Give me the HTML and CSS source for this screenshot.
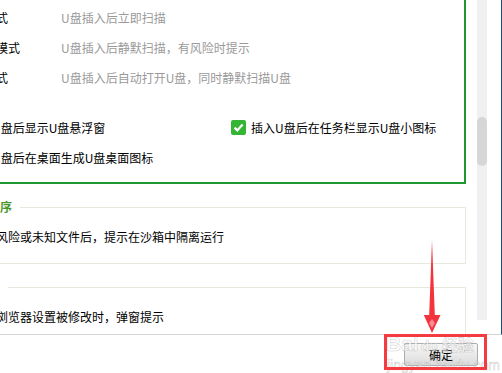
FILE: index.html
```html
<!DOCTYPE html>
<html lang="zh-CN">
<head>
    <meta charset="UTF-8" />
    <meta name="viewport" content="width=device-width, initial-scale=1.0"/>
    <title>U盘安全设置</title>
    <link rel="stylesheet" href="styles.css">
</head>
<body>
<div class="window">
    <div class="main">
        <div class="viewport">
            <div class="content">
                <div class="mode-box">
                    <div class="mode-row"><span class="mode-name">普通模式</span><span class="mode-desc">U盘插入后立即扫描</span></div>
                    <div class="mode-row"><span class="mode-name">全静默模式</span><span class="mode-desc">U盘插入后静默扫描，有风险时提示</span></div>
                    <div class="mode-row"><span class="mode-name">自动模式</span><span class="mode-desc">U盘插入后自动打开U盘，同时静默扫描U盘</span></div>

                    <div class="checks">
                        <label class="check">
                            <svg class="tick" width="15" height="15" viewBox="0 0 15 15"><rect width="15" height="15" rx="2" fill="#35b534"/><path d="M3.5 7.6 L6.3 10.4 L11.6 4.6" fill="none" stroke="#fff" stroke-width="2.2"/></svg>
                            插入U盘后显示U盘悬浮窗
                        </label>
                        <label class="check">
                            <svg class="tick" width="15" height="15" viewBox="0 0 15 15"><rect width="15" height="15" rx="2" fill="#35b534"/><path d="M3.5 7.6 L6.3 10.4 L11.6 4.6" fill="none" stroke="#fff" stroke-width="2.2"/></svg>
                            插入U盘后在任务栏显示U盘小图标
                        </label>
                        <label class="check">
                            <svg class="tick" width="15" height="15" viewBox="0 0 15 15"><rect width="15" height="15" rx="2" fill="#35b534"/><path d="M3.5 7.6 L6.3 10.4 L11.6 4.6" fill="none" stroke="#fff" stroke-width="2.2"/></svg>
                            插入U盘后在桌面生成U盘桌面图标
                        </label>
                    </div>
                </div>

                <fieldset class="group">
                    <legend>隔离可疑程序</legend>
                    <div class="group-row">运行时发现风险或未知文件后，提示在沙箱中隔离运行</div>
                </fieldset>

                <fieldset class="group">
                    <legend>浏览器防护</legend>
                    <div class="group-row">首页或默认浏览器设置被修改时，弹窗提示</div>
                </fieldset>
            </div>
        </div>
        <div class="scrollbar"><div class="thumb"></div></div>
    </div>

    <div class="footer">
        <button class="ok" type="button">确定</button>
    </div>

    <!-- annotation drawn over the screenshot -->
    <div class="watermark">
        <div class="wm-logo"><span class="wm-bai">Bai</span><span class="wm-du">du</span><span class="wm-cn">经验</span></div>
        <div class="wm-url">jingyan.baidu.com</div>
    </div>
    <div class="mark-box"></div>
    <svg class="arrow" width="26" height="100" viewBox="0 0 26 100">
        <polygon points="12,4 14.8,79 20.5,79 12,97 3.8,79 9.2,79" fill="#f4333d"/>
        <polygon points="12,83 15,87 12,92 9,87" fill="#f98a90"/>
    </svg>
</div>
</body>
</html>
```

FILE: styles.css
```css
body {
  margin: 0;
  overflow: hidden;
  background-color: #fff;
  color: #000;
  font-family: "Noto Sans CJK SC", "Liberation Sans", sans-serif;
  font-size: 12px;
}

.window {
  position: relative;
  width: 502px;
  height: 373px;
}

.main {
  display: flex;
  box-sizing: border-box;
  height: 335px;
  border-right: 1px solid #1b4b7d;
  border-bottom: 1px solid #d6d6d6;
}

.viewport {
  width: 477px;
  flex-shrink: 0;
  overflow: hidden;
}

.content {
  width: 536px;
  margin: -20px 0 0 -70px;
}

.mode-box {
  border: 2px solid #1f9833;
  padding: 21px 0 10px 8px;
}

.mode-row {
  display: flex;
  line-height: 30px;
  padding-left: 20px;
}

.mode-name {
  width: 101px;
  flex-shrink: 0;
}

.mode-desc {
  color: #9a9a9a;
}

.checks {
  display: grid;
  grid-template-columns: 283px auto;
  margin-top: 19px;
  padding-left: 8px;
}

.check {
  display: flex;
  align-items: center;
  gap: 5px;
  height: 30px;
  white-space: nowrap;
}

.tick {
  flex-shrink: 0;
}

.group {
  margin: 15px 0 0;
  padding: 14px 0 18px 5px;
  border: 1px solid #e8e8de;
  min-width: 0;
}

.group legend {
  padding: 0 8px 0 4px;
  line-height: 16px;
  color: #4a962c;
  font-weight: bold;
}

.group-row {
  line-height: 16px;
  white-space: nowrap;
}

.scrollbar {
  width: 10px;
  height: 320px;
  flex-shrink: 0;
  box-sizing: border-box;
  padding-top: 117px;
  background-color: #f0f0f0;
}

.thumb {
  height: 49px;
  border-radius: 5px;
  background-color: #d6d6d6;
}

.footer {
  height: 38px;
  display: flex;
  justify-content: flex-end;
  align-items: center;
  padding-right: 24px;
}

.ok {
  width: 74px;
  height: 23px;
  border: 1px solid #adadad;
  border-radius: 2px;
  background: linear-gradient(#f7f7f7, #dcdcdc);
  font-family: "Noto Sans CJK SC", sans-serif;
  font-size: 12px;
  color: #000;
  padding: 0;
}

.mark-box {
  position: absolute;
  left: 384px;
  top: 334px;
  width: 103px;
  height: 36px;
  box-sizing: border-box;
  border: 3px solid #f43b3f;
}

.arrow {
  position: absolute;
  left: 420px;
  top: 236px;
}

.watermark {
  position: absolute;
  left: 386px;
  top: 333px;
  color: rgba(255, 255, 255, 0.55);
  -webkit-text-stroke: 0.6px rgba(120, 120, 120, 0.35);
  pointer-events: none;
}

.wm-logo {
  display: flex;
  align-items: baseline;
  font-family: "Liberation Sans", sans-serif;
  font-weight: bold;
  line-height: 22px;
}

.wm-bai {
  font-size: 21px;
}

.wm-du {
  font-size: 14px;
  margin-left: 2px;
}

.wm-cn {
  font-family: "Noto Sans CJK SC", sans-serif;
  font-size: 16px;
  margin-left: 4px;
}

.wm-url {
  font-family: "Liberation Sans", sans-serif;
  font-size: 14px;
  line-height: 16px;
  margin-left: 1px;
}
```
